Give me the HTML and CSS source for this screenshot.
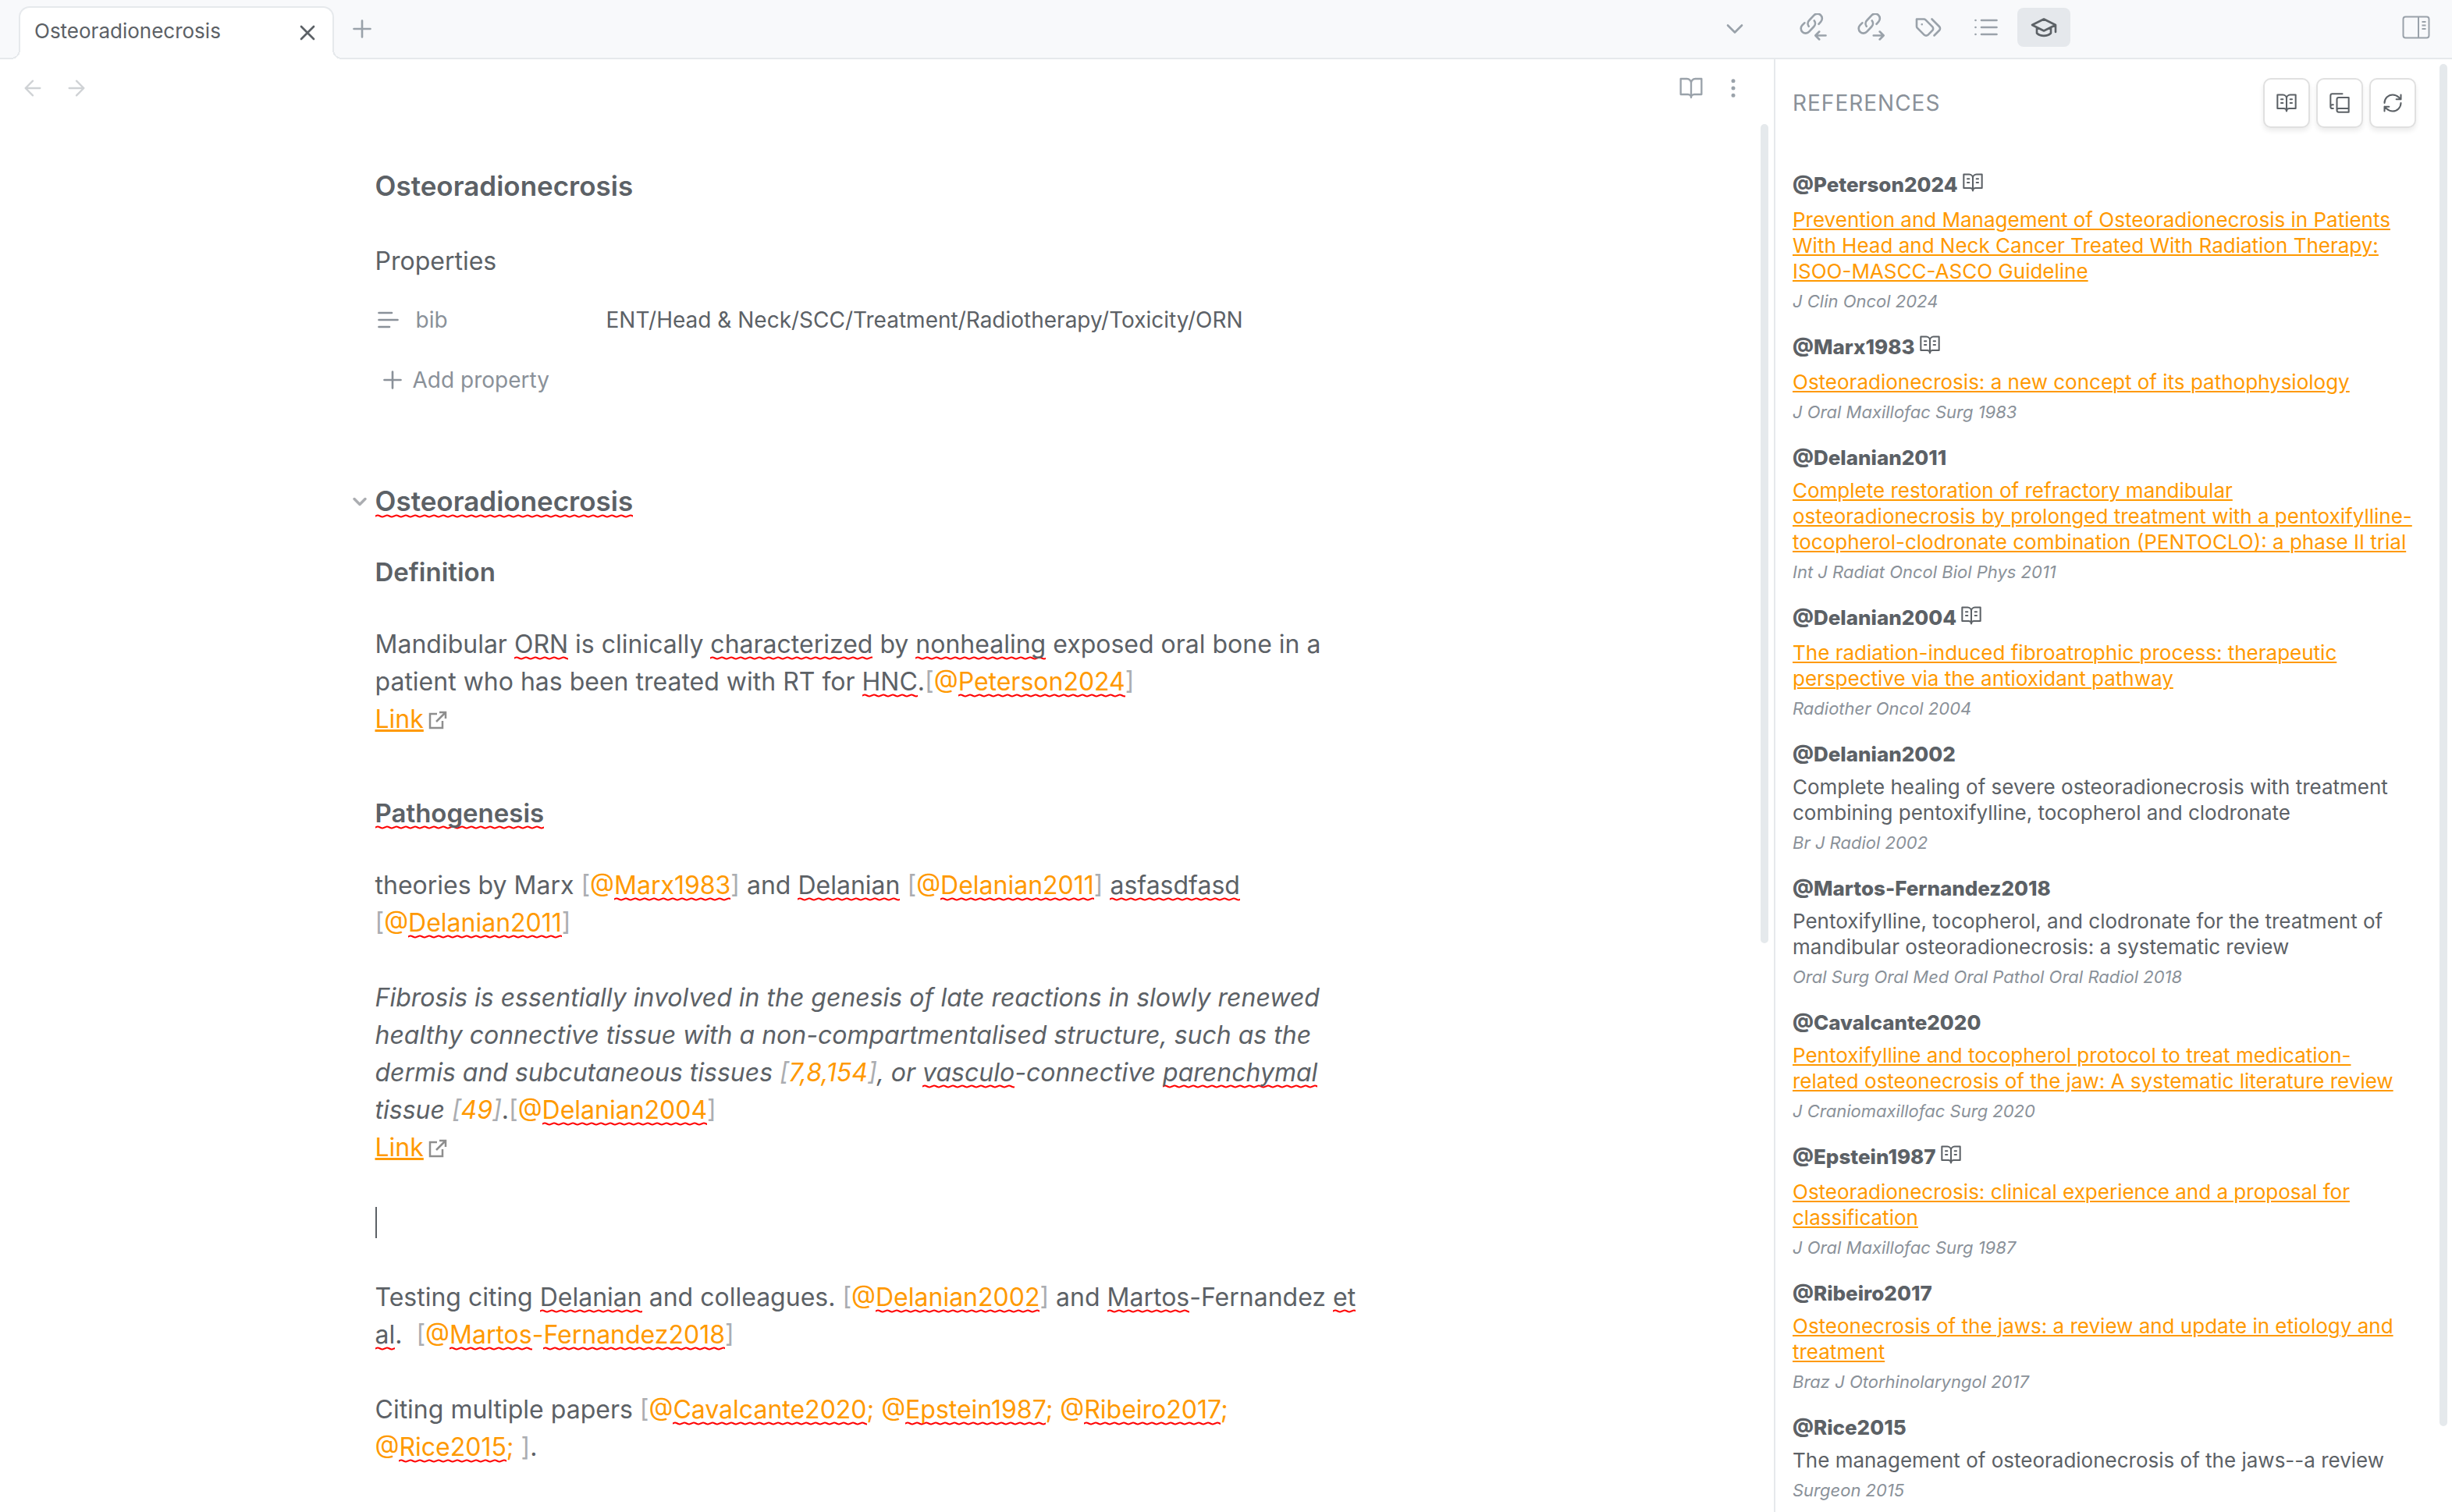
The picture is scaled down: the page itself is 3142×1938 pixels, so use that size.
FILE: index.html
```html
<!DOCTYPE html>
<html lang="en">
<head>
<meta charset="utf-8">
<title>Osteoradionecrosis</title>
<link rel="stylesheet" href="styles.css">
</head>
<body>
<svg class="sprite" aria-hidden="true">
  <symbol id="book-text" viewBox="0 0 24 24"><path d="M2 3h6a4 4 0 0 1 4 4v14a3 3 0 0 0-3-3H2zM22 3h-6a4 4 0 0 0-4 4v14a3 3 0 0 1 3-3h7zM6 8h2M6 12h2M16 8h2M16 12h2"/></symbol>
  <symbol id="external" viewBox="0 0 24 24"><path d="M11 4H2v18h16v-9M14 2h8v8M22 2 10 14"/></symbol>
  <symbol id="plus" viewBox="0 0 24 24"><path d="M5 12h14M12 5v14"/></symbol>
  <symbol id="chevron" viewBox="0 0 24 24"><path d="m6 9 6 6 6-6"/></symbol>
</svg>
<header class="topbar">
  <div class="topbar-main">
    <div class="tab">
      <span class="tab-title">Osteoradionecrosis</span>
      <button class="icon-btn dark" aria-label="Close tab"><svg class="icon md" viewBox="0 0 24 24"><path d="M18 6 6 18M6 6l12 12"/></svg></button>
    </div>
    <button class="icon-btn new-tab" aria-label="New tab"><svg class="icon lg"><use href="#plus"/></svg></button>
    <button class="icon-btn tab-list" aria-label="Tab list"><svg class="icon lg"><use href="#chevron"/></svg></button>
  </div>
  <nav class="topbar-side">
    <button class="side-btn" aria-label="Backlinks"><svg class="icon lg" viewBox="0 0 24 24"><path d="M14.400 7.900a4 4 0 0 1-.4 5.200l-4 4.300a4 4 0 1 1-5.900-5.500L6.100 9.800M9.700 12.800a4 4 0 0 1 .4-5.200l4-4.300A4 4 0 0 1 20 8.800L18.200 10.800" transform="translate(-1.200 -1.600)"/><path d="M23 19h-8.500M17.500 15.700 14.200 19l3.300 3.300"/></svg></button>
    <button class="side-btn" aria-label="Outgoing links"><svg class="icon lg" viewBox="0 0 24 24"><path d="M14.400 7.900a4 4 0 0 1-.4 5.200l-4 4.300a4 4 0 1 1-5.900-5.500L6.100 9.800M9.700 12.800a4 4 0 0 1 .4-5.200l4-4.300A4 4 0 0 1 20 8.800L18.200 10.800" transform="translate(-1.200 -1.600)"/><path d="M14.500 19H23M19.800 15.700l3.300 3.300-3.300 3.300"/></svg></button>
    <button class="side-btn" aria-label="Tags"><svg class="icon lg" viewBox="0 0 24 24"><path d="m15 5 6.300 6.300a2.400 2.400 0 0 1 0 3.400L17 19M9.586 5.586A2 2 0 0 0 8.172 5H2v6.172a2 2 0 0 0 .586 1.414l5.800 5.800a2.400 2.400 0 0 0 3.400 0l3.600-3.600a2.400 2.400 0 0 0 0-3.400zM6.500 9.500h.01"/></svg></button>
    <button class="side-btn" aria-label="Outline"><svg class="icon lg" viewBox="0 0 24 24"><path d="M8 6h13M8 12h13M8 18h13M3 6h.01M3 12h.01M3 18h.01"/></svg></button>
    <button class="side-btn active" aria-label="References"><svg class="icon lg" viewBox="0 0 24 24"><path d="M22 10 12 5 2 10l10 5 10-5v6M6 12v5c3 3 9 3 12 0v-5"/></svg></button>
    <button class="icon-btn toggle" aria-label="Toggle right sidebar"><svg class="panel-icon" viewBox="0 0 36 30"><rect x="1.500" y="1.500" width="33" height="27" rx="3"/><path d="M21 2v26M25.500 8h5M25.500 12.500h5M25.500 17h5"/></svg></button>
  </nav>
</header>
<div class="workspace">
  <main class="note">
    <div class="note-bar">
      <button class="icon-btn faint" aria-label="Back"><svg class="icon md" viewBox="0 0 24 24"><path d="m12 19-7-7 7-7M19 12H5"/></svg></button>
      <button class="icon-btn faint" aria-label="Forward"><svg class="icon md" viewBox="0 0 24 24"><path d="M5 12h14M12 5l7 7-7 7"/></svg></button>
      <button class="icon-btn reading" aria-label="Reading view"><svg class="icon md" viewBox="0 0 24 24"><path d="M2 3h6a4 4 0 0 1 4 4v14a3 3 0 0 0-3-3H2zM22 3h-6a4 4 0 0 0-4 4v14a3 3 0 0 1 3-3h7z"/></svg></button>
      <button class="icon-btn" aria-label="More options"><svg class="icon md dots" viewBox="0 0 24 24"><circle cx="12" cy="5" r="1"/><circle cx="12" cy="12" r="1"/><circle cx="12" cy="19" r="1"/></svg></button>
    </div>
    <article class="page">
      <h1 class="title">Osteoradionecrosis</h1>
      <section class="properties">
        <h2 class="prop-head">Properties</h2>
        <div class="prop-row">
          <label class="prop-key" for="bib"><svg class="icon lg" viewBox="0 0 24 24"><path d="M3 6h11M3 12h16M3 18h9"/></svg>bib</label>
          <input class="prop-value" id="bib" type="text" value="ENT/Head &amp; Neck/SCC/Treatment/Radiotherapy/Toxicity/ORN">
        </div>
        <button class="add-prop"><svg class="icon lg"><use href="#plus"/></svg>Add property</button>
      </section>
      <h2 class="title sub"><svg class="icon fold"><use href="#chevron"/></svg><span class="sp">Osteoradionecrosis</span></h2>
      <h3 class="section">Definition</h3>
      <p>Mandibular <span class="sp">ORN</span> is clinically <span class="sp">characterized</span> by <span class="sp">nonhealing</span> exposed oral bone in a patient who has been treated with RT for <span class="sp">HNC</span>.<span class="cite">[<b>@<span class="sp">Peterson2024</span></b>]</span><br><a href="#">Link</a><svg class="icon ext"><use href="#external"/></svg></p>
      <h3 class="section later"><span class="sp">Pathogenesis</span></h3>
      <p>theories by Marx <span class="cite">[<b>@<span class="sp">Marx1983</span></b>]</span> and <span class="sp">Delanian</span> <span class="cite">[<b>@<span class="sp">Delanian2011</span></b>]</span> <span class="sp">asfasdfasd</span> <span class="cite">[<b>@<span class="sp">Delanian2011</span></b>]</span></p>
      <p><em>Fibrosis is essentially involved in the genesis of late reactions in slowly renewed healthy connective tissue with a non-compartmentalised structure, such as the dermis and subcutaneous tissues <span class="cite">[<b>7,8,154</b>]</span>, or <span class="sp">vasculo</span>-connective <span class="sp">parenchymal</span> tissue <span class="cite">[<b>49</b>]</span></em>.<span class="cite">[<b>@<span class="sp">Delanian2004</span></b>]</span><br><a href="#">Link</a><svg class="icon ext"><use href="#external"/></svg></p>
      <p class="cursor-line"><span class="cursor"></span></p>
      <p>Testing citing <span class="sp">Delanian</span> and colleagues. <span class="cite">[<b>@<span class="sp">Delanian2002</span></b>]</span> and <span class="sp">Martos</span>-Fernandez <span class="sp">et</span> <span class="sp">al</span>.&nbsp; <span class="cite">[<b>@<span class="sp">Martos</span>-<span class="sp">Fernandez2018</span></b>]</span></p>
      <p>Citing multiple papers <span class="cite">[<b>@<span class="sp">Cavalcante2020</span>; @<span class="sp">Epstein1987</span>; @<span class="sp">Ribeiro2017</span>; @<span class="sp">Rice2015</span>; </b>]</span>.</p>
    </article>
    <div class="scroll note-scroll"></div>
  </main>
  <aside class="refs">
    <div class="refs-head">
      <h2>REFERENCES</h2>
      <button class="card-btn" aria-label="Open in library"><svg class="icon sm"><use href="#book-text"/></svg></button>
      <button class="card-btn" aria-label="Copy list"><svg class="icon sm" viewBox="0 0 24 24"><path d="M2 16V4a2 2 0 0 1 2-2h11M5 14H4a2 2 0 1 0 0 4h1M22 18H11a2 2 0 1 0 0 4h11V6H11a2 2 0 0 0-2 2v12"/></svg></button>
      <button class="card-btn" aria-label="Refresh"><svg class="icon sm" viewBox="0 0 24 24"><path d="M3 12a9 9 0 0 1 9-9 9.750 9.750 0 0 1 6.740 2.740L21 8M21 3v5h-5M21 12a9 9 0 0 1-9 9 9.750 9.750 0 0 1-6.740-2.740L3 16M8 16H3v5"/></svg></button>
    </div>
    <ul class="ref-list">
      <li><div class="key has-icon">@Peterson2024<svg class="icon sm"><use href="#book-text"/></svg></div><a href="#">Prevention and Management of Osteoradionecrosis in Patients With Head and Neck Cancer Treated With Radiation Therapy: ISOO-MASCC-ASCO Guideline</a><div class="journal">J Clin Oncol 2024</div></li>
      <li><div class="key has-icon">@Marx1983<svg class="icon sm"><use href="#book-text"/></svg></div><a href="#">Osteoradionecrosis: a new concept of its pathophysiology</a><div class="journal">J Oral Maxillofac Surg 1983</div></li>
      <li><div class="key">@Delanian2011</div><a href="#">Complete restoration of refractory mandibular osteoradionecrosis by prolonged treatment with a pentoxifylline-tocopherol-clodronate combination (PENTOCLO): a phase II trial</a><div class="journal">Int J Radiat Oncol Biol Phys 2011</div></li>
      <li><div class="key has-icon">@Delanian2004<svg class="icon sm"><use href="#book-text"/></svg></div><a href="#">The radiation-induced fibroatrophic process: therapeutic perspective via the antioxidant pathway</a><div class="journal">Radiother Oncol 2004</div></li>
      <li><div class="key">@Delanian2002</div><div class="ref-title">Complete healing of severe osteoradionecrosis with treatment combining pentoxifylline, tocopherol and clodronate</div><div class="journal">Br J Radiol 2002</div></li>
      <li><div class="key">@Martos-Fernandez2018</div><div class="ref-title">Pentoxifylline, tocopherol, and clodronate for the treatment of mandibular osteoradionecrosis: a systematic review</div><div class="journal">Oral Surg Oral Med Oral Pathol Oral Radiol 2018</div></li>
      <li><div class="key">@Cavalcante2020</div><a href="#">Pentoxifylline and tocopherol protocol to treat medication-related osteonecrosis of the jaw: A systematic literature review</a><div class="journal">J Craniomaxillofac Surg 2020</div></li>
      <li><div class="key has-icon">@Epstein1987<svg class="icon sm"><use href="#book-text"/></svg></div><a href="#">Osteoradionecrosis: clinical experience and a proposal for classification</a><div class="journal">J Oral Maxillofac Surg 1987</div></li>
      <li><div class="key">@Ribeiro2017</div><a href="#">Osteonecrosis of the jaws: a review and update in etiology and treatment</a><div class="journal">Braz J Otorhinolaryngol 2017</div></li>
      <li><div class="key">@Rice2015</div><div class="ref-title">The management of osteoradionecrosis of the jaws--a review</div><div class="journal">Surgeon 2015</div></li>
    </ul>
    <div class="scroll refs-scroll"></div>
  </aside>
</div>
</body>
</html>
```
FILE: styles.css
```css
:root {
  --text: #5c6166;
  --muted: #8a9199;
  --icon: #9aa2aa;
  --accent: #ff9900;
  --line: #e6e9ec;
  --bar: #f8f9fb;
  --side: 868px;
}
* { box-sizing: border-box; margin: 0; padding: 0; }
body {
  display: flex;
  flex-direction: column;
  height: 100vh;
  overflow: hidden;
  background: #fff;
  color: var(--text);
  font-family: Inter, sans-serif;
  font-size: 32px;
  line-height: 48px;
}
button, input { font: inherit; color: inherit; background: none; border: 0; }
.sprite { display: none; }
.icon { flex: none; fill: none; stroke: currentColor; stroke-width: 1.75; stroke-linecap: round; stroke-linejoin: round; }
.lg { width: 36px; height: 36px; }
.md { width: 32px; height: 32px; }
.sm { width: 28px; height: 28px; }
.icon-btn { display: flex; align-items: center; justify-content: center; color: var(--icon); }
.dark { color: var(--text); }
.dark .icon { stroke-width: 2; }
.faint { color: #cfd2d5; }

/* top bar */
.topbar { display: flex; flex: none; height: 76px; background: var(--bar); border-bottom: 2px solid var(--line); }
.topbar-main { display: flex; flex: 1; padding-left: 24px; }
.tab {
  position: relative;
  display: flex;
  align-items: center;
  justify-content: space-between;
  width: 404px;
  margin: 8px 0 -2px;
  padding: 0 16px 2px 18px;
  background: #fff;
  border: 2px solid var(--line);
  border-bottom: 0;
  border-radius: 14px 14px 0 0;
  font-size: 26px;
}
.tab-title { padding-bottom: 4px; }
.tab::before, .tab::after { content: ""; position: absolute; bottom: 0; width: 12px; height: 12px; }
.tab::before { left: -12px; background: radial-gradient(circle at 0 0, var(--bar) 10px, var(--line) 10px 12px, #fff 12px); }
.tab::after { right: -12px; background: radial-gradient(circle at 100% 0, var(--bar) 10px, var(--line) 10px 12px, #fff 12px); }
.new-tab { margin-left: 18px; }
.tab-list { margin: 0 33px 0 auto; }
.topbar-side { display: flex; gap: 6px; width: var(--side); padding: 10px 28px 14px 15px; }
.side-btn { display: flex; align-items: center; justify-content: center; width: 68px; height: 50px; border-radius: 8px; color: var(--icon); }
.side-btn.active { background: #e5e8ec; color: var(--text); }
.toggle { margin-left: auto; }
.panel-icon { width: 36px; height: 30px; fill: none; stroke: currentColor; stroke-width: 2; }

/* note */
.workspace { display: flex; flex: 1; min-height: 0; }
.note { position: relative; flex: 1; min-width: 0; overflow: hidden; }
.note-bar { display: flex; align-items: center; gap: 24px; height: 74px; padding: 0 36px 0 26px; }
.reading { margin-left: auto; }
.note-bar .icon-btn:last-child { margin-left: -2px; }
.dots { fill: currentColor; }
.page { max-width: 1312px; margin: 0 auto; padding: 61px 32px 48px 0; }
.title { font-size: 35px; line-height: 54px; font-weight: 600; }
.sub { position: relative; margin-bottom: 40px; }
.fold { position: absolute; left: -34px; top: 14px; width: 28px; height: 28px; color: #abadb1; stroke-width: 3; }
.properties { padding: 46px 0 104px; }
.prop-head { font-size: 32px; font-weight: 400; }
.prop-row { display: flex; align-items: center; height: 56px; margin: 23px 0 25px; font-size: 28px; }
.prop-key { display: flex; align-items: center; gap: 16px; width: 296px; color: var(--muted); }
.prop-value { flex: 1; min-width: 0; }
.add-prop { display: flex; align-items: center; gap: 8px; padding-left: 4px; font-size: 28px; color: var(--muted); }
.section { margin-bottom: 45px; font-size: 33px; font-weight: 600; }
.later { margin-top: 72px; }
p { margin-bottom: 48px; }
a { color: var(--accent); text-decoration: underline; text-decoration-thickness: 2px; text-underline-offset: 2px; }
p a { text-decoration-thickness: 3px; }
.cite { color: #abadb1; }
.cite b { font-weight: 400; color: var(--accent); }
.sp {
  padding-bottom: 1px;
  background: url("data:image/svg+xml,%3Csvg xmlns='http://www.w3.org/2000/svg' width='12' height='5'%3E%3Cpath d='M-3 3.500C-1 3.500 1 1.500 3 1.500S7 3.500 9 3.500S13 1.500 15 1.500' fill='none' stroke='red' stroke-width='2'/%3E%3C/svg%3E") repeat-x left bottom;
}
.ext { width: 24px; height: 24px; margin-left: 6px; vertical-align: -2px; color: #8e8e8e; stroke-width: 2.500; stroke-linecap: butt; stroke-linejoin: miter; }
.cursor-line { display: flex; align-items: center; height: 48px; }
.cursor { width: 2px; height: 40px; background: var(--text); }

.scroll { position: absolute; width: 10px; border-radius: 5px; background: #e5e9ec; }
.note-scroll { right: 7px; top: 83px; height: 1050px; }
.refs-scroll { right: 6px; top: 6px; height: 1746px; }

/* references */
.refs { position: relative; width: calc(var(--side) + 1px); padding: 24px 46px 0 22px; border-left: 2px solid var(--line); overflow: hidden; }
.refs-head { display: flex; align-items: center; gap: 8px; margin-bottom: 56px; }
.refs-head h2 { flex: 1; font-size: 28px; line-height: 36px; font-weight: 400; letter-spacing: 1px; color: var(--muted); }
.card-btn { display: flex; align-items: center; justify-content: center; width: 60px; height: 64px; border: 2px solid #e0e0e0; border-radius: 10px; background: #fff; box-shadow: 0 4px 6px rgba(0, 0, 0, .08); }
.ref-list { display: flex; flex-direction: column; gap: 28px; list-style: none; font-size: 26px; line-height: 33px; }
.key { display: flex; gap: 5px; height: 34px; margin-bottom: 8px; line-height: 34px; font-weight: 800; }
.has-icon { height: 37px; }
.ref-list a { display: block; }
.journal { margin-top: 8px; font-size: 22px; line-height: 28px; font-style: italic; color: var(--muted); }
```
